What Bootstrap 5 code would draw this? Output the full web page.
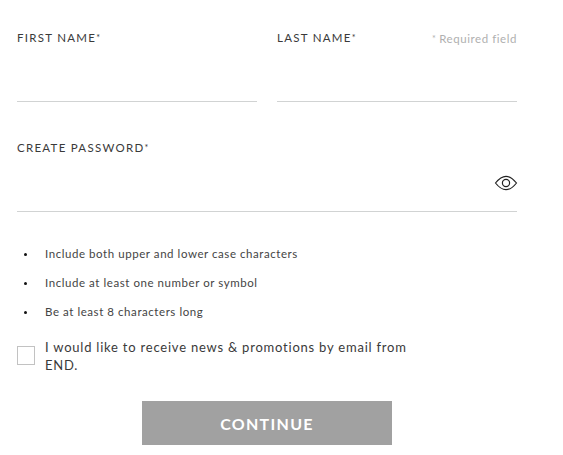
<!DOCTYPE html>
<html lang="en">
<head>
<meta charset="utf-8">
<meta name="viewport" content="width=device-width, initial-scale=1">
<title>Create account</title>
<link href="https://cdn.jsdelivr.net/npm/bootstrap@5.3.0/dist/css/bootstrap.min.css" rel="stylesheet">
<style>
  body { font-family: Lato, "Liberation Sans", sans-serif; color: #3a3a3a; background: #fff; overflow: hidden; }
  .signup { width: 500px; margin: 28px 0 0 17px; }
  .name-grid { column-gap: 20px; margin-bottom: 36px; }
  .field { height: 74px; border-bottom: 1px solid #d1d3d3; }
  .field-label { font-size: 11.5px; line-height: 20px; letter-spacing: 1.27px; white-space: nowrap; }
  .star { font-size: 9px; letter-spacing: 0; line-height: 1; vertical-align: 1px; }
  .required { font-size: 11.5px; line-height: 22px; letter-spacing: .56px; color: #b0b0b0; white-space: nowrap; }
  .field .form-control { font-size: 13px; box-shadow: none; height: 40px; }
  .eye { width: 24px; height: 16px; padding: 0; margin-top: 17px; margin-right: -1px; }
  .rules { margin: 27px 0 0; font-size: 11.5px; line-height: 29px; letter-spacing: .56px; color: #444; }
  .rules li { padding-left: 28px; height: 29px; position: relative; white-space: nowrap; }
  .rules li::before { content: ""; position: absolute; left: 7px; top: 14px; width: 3px; height: 3px; border-radius: 50%; background: #111; }
  .optin { margin-top: 12px; }
  .optin .form-check-input { width: 18px; height: 19px; margin: 8px 10px 0 0; border: 1px solid #c2c2c2; border-radius: 0; }
  .optin-text { font-size: 13px; line-height: 18px; letter-spacing: .78px; width: 375px; }
  .submit { width: 250px; height: 44px; background: #a1a1a1; color: #fff; font-size: 16px; font-weight: 700; letter-spacing: 1.3px; padding-top: 2px; margin-top: 27px; }
</style>
</head>
<body>
<form class="signup">
  <div class="d-flex name-grid">
    <div class="field flex-fill w-50">
      <label class="field-label d-block" for="first">FIRST NAME<span class="star">*</span></label>
      <input id="first" class="form-control border-0 p-0 bg-transparent" type="text">
    </div>
    <div class="field flex-fill w-50">
      <div class="d-flex justify-content-between">
        <label class="field-label" for="last">LAST NAME<span class="star">*</span></label>
        <span class="required"><span class="star">*</span> Required field</span>
      </div>
      <input id="last" class="form-control border-0 p-0 bg-transparent" type="text">
    </div>
  </div>
  <div class="field">
    <label class="field-label d-block" for="pass">CREATE PASSWORD<span class="star">*</span></label>
    <div class="d-flex align-items-start">
      <input id="pass" class="form-control border-0 p-0 bg-transparent" type="password">
      <button class="btn border-0 eye d-flex flex-shrink-0" type="button" aria-label="Show password">
        <svg width="24" height="16" viewBox="0 0 24 16" fill="none" stroke="#222" stroke-width="1.200"><path d="M1.5 8C5 3.600 8.200 1.300 12 1.300S19 3.600 22.500 8C19 12.400 15.800 14.700 12 14.700S5 12.400 1.500 8Z"/><circle cx="12" cy="8" r="3.600"/></svg>
      </button>
    </div>
  </div>
  <ul class="rules list-unstyled">
    <li>Include both upper and lower case characters</li>
    <li>Include at least one number or symbol</li>
    <li>Be at least 8 characters long</li>
  </ul>
  <div class="optin d-flex align-items-start">
    <input id="news" class="form-check-input flex-shrink-0" type="checkbox">
    <label class="optin-text" for="news">I would like to receive news &amp; promotions by email from END.</label>
  </div>
  <button class="submit btn d-block mx-auto rounded-0 border-0 px-0 pb-0" type="button">CONTINUE</button>
</form>
<script src="https://cdn.jsdelivr.net/npm/bootstrap@5.3.0/dist/js/bootstrap.bundle.min.js"></script>
</body>
</html>
